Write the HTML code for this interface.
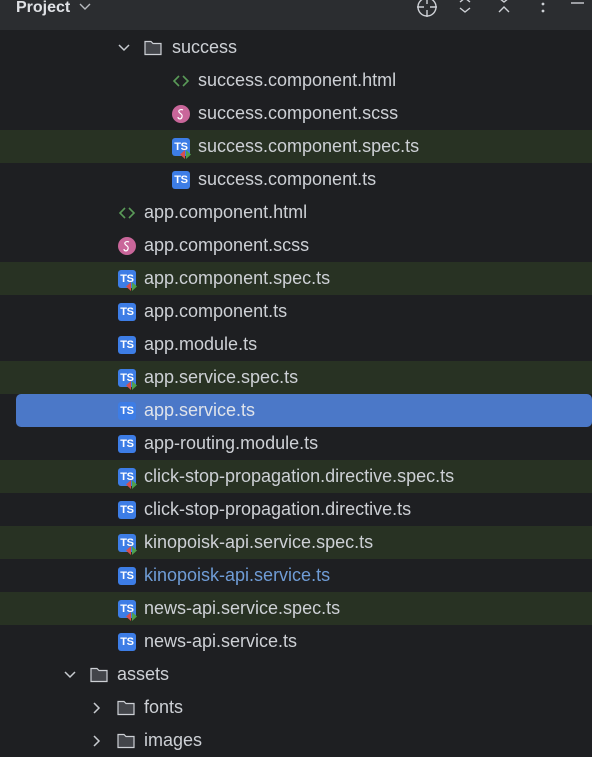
<!DOCTYPE html><html><head><meta charset="utf-8"><style>
*{margin:0;padding:0;box-sizing:border-box}
body{width:592px;height:752px;background:#1e1f22;overflow:hidden;font-family:"Liberation Sans",sans-serif;position:relative}
.hdr{position:absolute;left:0;top:0;width:592px;height:30px;background:#2b2d30}
.hdr .t{position:absolute;left:16px;top:-1px;line-height:18px;font-size:16px;font-weight:bold;color:#dfe1e5}
.row{position:absolute;left:0;width:592px;height:33px}
.g{background:#283223}
.sel{left:16px;width:576px;background:#4b78c8;border-radius:5px}
.tx{position:absolute;top:6px;font-size:18px;line-height:21px;color:#cdd0d5;white-space:nowrap}
.ic{position:absolute;top:8px;width:18px;height:18px}
.ts{background:#3d7de6;border-radius:3px;color:#fff;font-weight:bold;font-size:11px;line-height:18px;text-align:center;letter-spacing:-0.3px}
</style></head><body>
<div class="hdr"><div class="t">Project <svg width="14" height="10" viewBox="0 0 14 10" style="margin-left:3px"><path d="M2 2l5 5 5-5" stroke="#b8bbc0" stroke-width="1.4" fill="none"/></svg></div>
<svg style="position:absolute;left:414px;top:-4px" width="170" height="26" viewBox="0 0 170 26">
<circle cx="13" cy="11" r="9" stroke="#cdd0d5" stroke-width="1.4" fill="none"/><path d="M13 1v7M13 14v7M3 11h7M16 11h7" stroke="#cdd0d5" stroke-width="1.4"/>
<path d="M46 6l5-4 5 4M46 12l5 4 5-4" stroke="#cdd0d5" stroke-width="1.4" fill="none"/>
<path d="M85 2l5 4 5-4M85 16l5-5 5 5" stroke="#cdd0d5" stroke-width="1.4" fill="none"/>
<circle cx="129" cy="8" r="1.4" fill="#cdd0d5"/><circle cx="129" cy="15" r="1.4" fill="#cdd0d5"/>
<path d="M157 7h13" stroke="#cdd0d5" stroke-width="1.4"/></svg></div>

<div class="row" style="top:31px"><svg class="ic" style="left:116px" viewBox="0 0 18 18"><path d="M3 6l5 5 5-5" stroke="#c8cbd0" stroke-width="1.5" fill="none"/></svg><svg class="ic" style="left:144px" viewBox="0 0 18 18"><path d="M1 2.5h6l2 2h8v11h-16z" fill="#43454a" stroke="#cdd0d5" stroke-width="1.2"/></svg><div class="tx" style="left:172px">success</div></div>

<div class="row" style="top:64px"><svg class="ic" style="left:172px" viewBox="0 0 18 18"><path d="M7 4l-5 5 5 5M11 4l5 5-5 5" stroke="#5a9a58" stroke-width="1.6" fill="none"/></svg><div class="tx" style="left:198px">success.component.html</div></div>
<div class="row" style="top:97px"><svg class="ic" style="left:172px" viewBox="0 0 18 18"><circle cx="9" cy="9" r="9" fill="#c9669a"/><path d="M11 5c-2-1-5 0-4 2s4 2 3 5-4 2-4 0" stroke="#fff" stroke-width="1.2" fill="none"/></svg><div class="tx" style="left:198px">success.component.scss</div></div>
<div class="row g" style="top:130px"><div class="ic ts" style="left:172px">TS</div><svg style="position:absolute;left:180px;top:20px" width="12" height="9"><path d="M5 0l-5 4.5 5 4.5z" fill="#d64f4f"/><path d="M6 0l5 4.5-5 4.5z" fill="#4fa04f"/></svg><div class="tx" style="left:198px">success.component.spec.ts</div></div>
<div class="row" style="top:163px"><div class="ic ts" style="left:172px">TS</div><div class="tx" style="left:198px">success.component.ts</div></div>

<div class="row" style="top:196px"><svg class="ic" style="left:118px" viewBox="0 0 18 18"><path d="M7 4l-5 5 5 5M11 4l5 5-5 5" stroke="#5a9a58" stroke-width="1.6" fill="none"/></svg><div class="tx" style="left:144px">app.component.html</div></div>
<div class="row" style="top:229px"><svg class="ic" style="left:118px" viewBox="0 0 18 18"><circle cx="9" cy="9" r="9" fill="#c9669a"/><path d="M11 5c-2-1-5 0-4 2s4 2 3 5-4 2-4 0" stroke="#fff" stroke-width="1.2" fill="none"/></svg><div class="tx" style="left:144px">app.component.scss</div></div>
<div class="row g" style="top:262px"><div class="ic ts" style="left:118px">TS</div><svg style="position:absolute;left:126px;top:20px" width="12" height="9"><path d="M5 0l-5 4.5 5 4.5z" fill="#d64f4f"/><path d="M6 0l5 4.5-5 4.5z" fill="#4fa04f"/></svg><div class="tx" style="left:144px">app.component.spec.ts</div></div>
<div class="row" style="top:295px"><div class="ic ts" style="left:118px">TS</div><div class="tx" style="left:144px">app.component.ts</div></div>
<div class="row" style="top:328px"><div class="ic ts" style="left:118px">TS</div><div class="tx" style="left:144px">app.module.ts</div></div>
<div class="row g" style="top:361px"><div class="ic ts" style="left:118px">TS</div><svg style="position:absolute;left:126px;top:20px" width="12" height="9"><path d="M5 0l-5 4.5 5 4.5z" fill="#d64f4f"/><path d="M6 0l5 4.5-5 4.5z" fill="#4fa04f"/></svg><div class="tx" style="left:144px">app.service.spec.ts</div></div>
<div class="row sel" style="top:394px"><div class="ic ts" style="left:102px">TS</div><div class="tx" style="left:128px;color:#dfe3ea">app.service.ts</div></div>
<div class="row" style="top:427px"><div class="ic ts" style="left:118px">TS</div><div class="tx" style="left:144px">app-routing.module.ts</div></div>
<div class="row g" style="top:460px"><div class="ic ts" style="left:118px">TS</div><svg style="position:absolute;left:126px;top:20px" width="12" height="9"><path d="M5 0l-5 4.5 5 4.5z" fill="#d64f4f"/><path d="M6 0l5 4.5-5 4.5z" fill="#4fa04f"/></svg><div class="tx" style="left:144px">click-stop-propagation.directive.spec.ts</div></div>
<div class="row" style="top:493px"><div class="ic ts" style="left:118px">TS</div><div class="tx" style="left:144px">click-stop-propagation.directive.ts</div></div>
<div class="row g" style="top:526px"><div class="ic ts" style="left:118px">TS</div><svg style="position:absolute;left:126px;top:20px" width="12" height="9"><path d="M5 0l-5 4.5 5 4.5z" fill="#d64f4f"/><path d="M6 0l5 4.5-5 4.5z" fill="#4fa04f"/></svg><div class="tx" style="left:144px">kinopoisk-api.service.spec.ts</div></div>
<div class="row" style="top:559px"><div class="ic ts" style="left:118px">TS</div><div class="tx" style="left:144px;color:#6f9cd6">kinopoisk-api.service.ts</div></div>
<div class="row g" style="top:592px"><div class="ic ts" style="left:118px">TS</div><svg style="position:absolute;left:126px;top:20px" width="12" height="9"><path d="M5 0l-5 4.5 5 4.5z" fill="#d64f4f"/><path d="M6 0l5 4.5-5 4.5z" fill="#4fa04f"/></svg><div class="tx" style="left:144px">news-api.service.spec.ts</div></div>
<div class="row" style="top:625px"><div class="ic ts" style="left:118px">TS</div><div class="tx" style="left:144px">news-api.service.ts</div></div>

<div class="row" style="top:658px"><svg class="ic" style="left:62px" viewBox="0 0 18 18"><path d="M3 6l5 5 5-5" stroke="#c8cbd0" stroke-width="1.5" fill="none"/></svg><svg class="ic" style="left:90px" viewBox="0 0 18 18"><path d="M1 2.5h6l2 2h8v11h-16z" fill="#43454a" stroke="#cdd0d5" stroke-width="1.2"/></svg><div class="tx" style="left:117px">assets</div></div>
<div class="row" style="top:691px"><svg class="ic" style="left:88px" viewBox="0 0 18 18"><path d="M6 4l5 5-5 5" stroke="#c8cbd0" stroke-width="1.5" fill="none"/></svg><svg class="ic" style="left:117px" viewBox="0 0 18 18"><path d="M1 2.5h6l2 2h8v11h-16z" fill="#43454a" stroke="#cdd0d5" stroke-width="1.2"/></svg><div class="tx" style="left:144px">fonts</div></div>
<div class="row" style="top:724px"><svg class="ic" style="left:88px" viewBox="0 0 18 18"><path d="M6 4l5 5-5 5" stroke="#c8cbd0" stroke-width="1.5" fill="none"/></svg><svg class="ic" style="left:117px" viewBox="0 0 18 18"><path d="M1 2.5h6l2 2h8v11h-16z" fill="#43454a" stroke="#cdd0d5" stroke-width="1.2"/></svg><div class="tx" style="left:144px">images</div></div>
</body></html>
